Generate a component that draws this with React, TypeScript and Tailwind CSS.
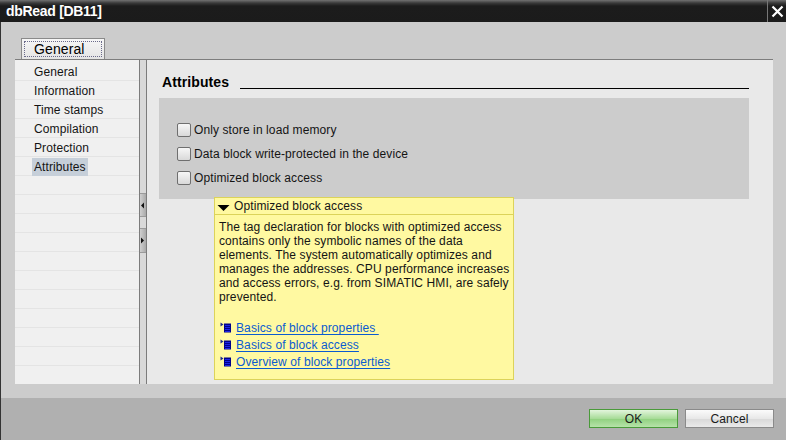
import React from 'react';

const navItems = ['General', 'Information', 'Time stamps', 'Compilation', 'Protection', 'Attributes'];
const options = ['Only store in load memory', 'Data block write-protected in the device', 'Optimized block access'];
const links = ['Basics of block properties ', 'Basics of block access', 'Overview of block properties'];

const helpLines = [
  'The tag declaration for blocks with optimized access',
  'contains only the symbolic names of the data',
  'elements. The system automatically optimizes and',
  'manages the addresses. CPU performance increases',
  'and access errors, e.g. from SIMATIC HMI, are safely',
  'prevented.',
];

// small "help topic" book marker in front of each link
const BookIcon = () => (
  <svg width="14" height="14" viewBox="0 0 14 14" className="shrink-0">
    <path d="M1.5 2.5 L4.5 4.5 L1.5 6.5 Z" fill="#1c2a8c" />
    <rect x="5" y="3.5" width="7" height="9" fill="#00008a" />
    <path d="M6 5.5h5M6 7.5h5M6 9.5h5M6 11.5h5" stroke="#2430ff" strokeWidth="0.8" />
  </svg>
);

const Checkbox = () => (
  <span className="w-[14px] h-[14px] rounded-[2px] border border-[#6f6f6f] bg-gradient-to-b from-[#f7f7f7] to-[#d9d9d9] shrink-0" />
);

export default function App() {
  return (
    <div className="w-[786px] h-[440px] flex flex-col overflow-hidden text-[12px] text-[#141414] font-['Liberation_Sans',Arial,sans-serif] tracking-[0.1px]">
      {/* title bar */}
      <div className="h-[22px] shrink-0 flex items-stretch bg-[linear-gradient(to_bottom,#727272_0px,#3a3a3a_3px,#1c1c1c_6px,#1b1b1b_100%)]">
        <div className="flex-1 pl-[6px] flex items-center text-white font-bold text-[14px] tracking-[-0.3px]">dbRead [DB11]</div>
        <div className="w-[19px] border-l border-[#777] flex items-center justify-center">
          <svg width="13" height="13" viewBox="0 0 13 13">
            <path d="M1.5 1.5 L11.5 11.5 M11.5 1.5 L1.5 11.5" stroke="#fff" strokeWidth="2.2" />
          </svg>
        </div>
      </div>

      {/* dialog body */}
      <div className="h-[376px] shrink-0 bg-[#cccccc] border-l border-[#333] pt-[16px] pl-[14px] pr-[13px] flex flex-col">
        <div className="h-[21px] shrink-0 flex pl-[6px]">
          <div className="h-[21px] w-[84px] border border-b-0 border-[#8a8a8a] bg-gradient-to-b from-[#f6f6f6] to-[#e4e4e4] p-[2px]">
            <div className="h-full border border-dotted border-[#6a6a8a] flex items-center pl-[9px] text-[14px] text-black">General</div>
          </div>
        </div>

        <div className="h-[325px] shrink-0 flex border-t border-[#7d7d7d] overflow-hidden">
          {/* navigation */}
          <div className="w-[124px] bg-[#f0f0f0] pt-[2px] overflow-hidden">
            {navItems.concat(Array(12).fill('')).map((item, i) => (
              <div key={i} className="h-[19px] border-b border-[#e4e4e4] flex items-center pl-[17px] pt-px">
                {item && (
                  <span className={`h-[18px] flex items-center px-[2px] ${item === 'Attributes' ? 'bg-[#c6cfd9]' : ''}`}>{item}</span>
                )}
              </div>
            ))}
          </div>

          {/* splitter */}
          <div className="w-[8px] border-x border-[#7c7c7c] bg-[#d9d9d9] flex flex-col pt-[133px]">
            <div className="h-[24px] border-y border-[#9a9a9a] bg-gradient-to-r from-[#cfcfcf] to-[#a9a9a9] flex items-center">
              <svg width="6" height="7" viewBox="0 0 6 7"><path d="M4 0.5 L1 3.5 L4 6.5 Z" fill="#111" /></svg>
            </div>
            <div className="h-[11px]" />
            <div className="h-[25px] border-y border-[#9a9a9a] bg-gradient-to-r from-[#cfcfcf] to-[#a9a9a9] flex items-center">
              <svg width="6" height="7" viewBox="0 0 6 7"><path d="M1 0.5 L4 3.5 L1 6.5 Z" fill="#111" /></svg>
            </div>
          </div>

          {/* content */}
          <div className="flex-1 bg-[#e9e9e9] flex flex-col">
            <div className="mt-[14px] h-[16px] flex items-end pl-[15px] mr-[24px]">
              <span className="font-bold text-[14px] leading-[16px] text-black pt-px">Attributes</span>
              <div className="flex-1 h-px bg-black ml-[11px] mb-[1px]" />
            </div>

            <div className="mt-[8px] ml-[12px] mr-[24px] h-[101px] bg-[#cccccc] pt-[20px] pl-[18px]">
              {options.map((o) => (
                <div key={o} className="h-[24px] flex items-center gap-[3px]">
                  <Checkbox />
                  <span>{o}</span>
                </div>
              ))}
            </div>

            <div className="relative -mt-[2px] ml-[67px] w-[300px] h-[183px] bg-[#fff9a1] border border-[#dcd35a]">
              <div className="h-[17px] border-b border-[#dcd35a] flex items-center pl-[2px] gap-[4px]">
                <svg width="13" height="8" viewBox="0 0 13 8" className="mt-[3px]"><path d="M0.5 1 L12.5 1 L6.5 7 Z" fill="#000" /></svg>
                <span>Optimized block access</span>
              </div>
              <div className="pl-[4px] pt-[5px] leading-[14px]">
                {helpLines.map((l) => (
                  <div key={l}>{l}</div>
                ))}
              </div>
              <div className="pl-[4px] mt-[16px]">
                {links.map((l) => (
                  <div key={l} className="h-[17px] flex items-start gap-[3px]">
                    <BookIcon />
                    <span className="text-[#0b5bd0] underline underline-offset-[2px] whitespace-pre leading-[17px]">{l}</span>
                  </div>
                ))}
              </div>
            </div>
          </div>
        </div>
      </div>

      {/* footer */}
      <div className="h-[42px] shrink-0 bg-[#b0b0b0] border-l border-[#333] flex justify-end items-start pt-[11px] pr-[12px] gap-[7px]">
        <button className="w-[89px] h-[19px] border border-[#4a9a3a] bg-[linear-gradient(to_bottom,#e3f5dd,#a8dc99_50%,#8fd07e_51%,#b6e3a9)] flex items-center justify-center text-[12px] text-[#1a1a1a]">OK</button>
        <button className="w-[89px] h-[19px] border border-[#8a8a8a] bg-[linear-gradient(to_bottom,#fbfbfb,#e8e8e8_50%,#d8d8d8_51%,#eaeaea)] flex items-center justify-center text-[12px] text-[#1a1a1a]">Cancel</button>
      </div>
    </div>
  );
}
